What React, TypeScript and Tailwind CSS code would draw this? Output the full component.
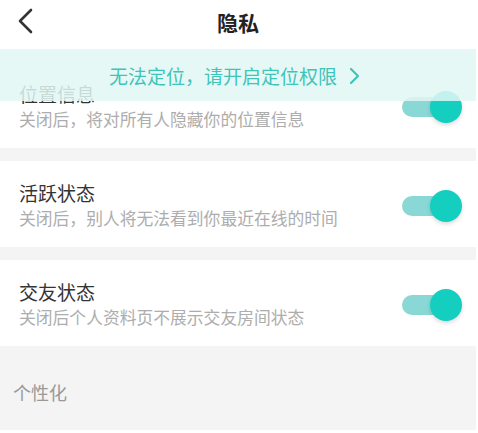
import React from "react";

const font = { fontFamily: '"Noto Sans CJK SC", "Noto Sans", sans-serif' };

interface IRow {
  title: string;
  desc: string;
}

const rows: IRow[] = [
  { title: "位置信息", desc: "关闭后，将对所有人隐藏你的位置信息" },
  { title: "活跃状态", desc: "关闭后，别人将无法看到你最近在线的时间" },
  { title: "交友状态", desc: "关闭后个人资料页不展示交友房间状态" },
];

function Toggle() {
  return (
    <div className="relative w-[60px] h-[34px] flex items-center">
      <div className="w-[48px] h-[20px] rounded-full bg-[#8ad8d5]" />
      <div className="absolute right-0 top-[1px] w-[32px] h-[32px] rounded-full bg-[#14cfbf] shadow-[0_2px_4px_rgba(0,0,0,0.15)]" />
    </div>
  );
}

export default function App() {
  return (
    <div className="w-[478px] h-[433px] bg-white overflow-hidden" style={font}>
      <div className="w-[476px] relative">
        {/* Header */}
        <div className="h-[48px] flex items-center justify-center relative bg-white">
          <svg className="absolute left-[16px] top-[8px]" width="20" height="26" viewBox="0 0 20 26">
            <path d="M15 2 L4 13 L15 24" fill="none" stroke="#333" strokeWidth="2.6" strokeLinecap="round" strokeLinejoin="round" />
          </svg>
          <h1 className="text-[21px] font-bold text-[#222] leading-none -mt-[4px]">隐私</h1>
        </div>

        {/* Banner overlay */}
        <div className="absolute left-0 top-[49px] w-full h-[52px] bg-[#e2f7f5]/85 flex items-center justify-center z-10">
          <span className="text-[19px] text-[#3ec4b8] leading-none -ml-[6px]">无法定位，请开启定位权限</span>
          <svg className="ml-[11px] mt-[1px]" width="13" height="18" viewBox="0 0 13 18">
            <path d="M3 2 L10 9 L3 16" fill="none" stroke="#3ec4b8" strokeWidth="2.2" strokeLinecap="round" strokeLinejoin="round" />
          </svg>
        </div>

        {rows.map((row, index) => (
          <div key={row.title}>
            {index > 0 && <div className="h-[13px] bg-[#f4f4f4]" />}
            <div className={`flex items-center justify-between pl-[19px] pr-[14px] bg-white ${index === 0 ? "h-[100px] pt-[14px]" : "h-[86px]"}`}>
              <div className="flex flex-col pt-[2px]">
                <p className="text-[19px] text-[#333] leading-[24px]">{row.title}</p>
                <p className="text-[16.8px] text-[#adadad] leading-[22px] mt-[2px]">{row.desc}</p>
              </div>
              <div className="pt-[4px]">
                <Toggle />
              </div>
            </div>
          </div>
        ))}

        {/* Section header */}
        <div className="h-[84px] bg-[#f4f4f4] flex items-center pl-[13px] pt-[8px]">
          <p className="text-[18px] text-[#999] leading-none">个性化</p>
        </div>
      </div>
    </div>
  );
}
